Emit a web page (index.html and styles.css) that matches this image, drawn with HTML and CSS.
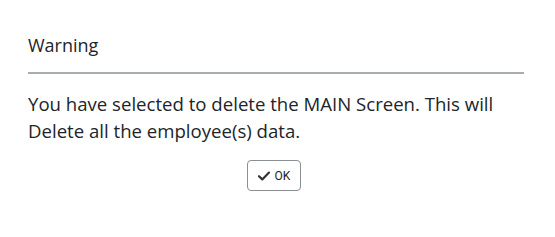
FILE: index.html
```html
<!DOCTYPE html>
<html>
<head>
<meta charset="utf-8">
<link rel="stylesheet" href="styles.css">
</head>
<body>
<div class="dialog">
  <div class="header">Warning</div>
  <div class="body">
    <p class="message">You have selected to delete the MAIN Screen. This will Delete all the employee(s) data.</p>
    <div class="actions">
      <button class="btn">
        <svg class="icon" viewBox="0 0 12 10" width="12" height="10"><path d="M1 5.2 L4.3 8.4 L11 1.6" fill="none" stroke="#333" stroke-width="2.2" stroke-linecap="round" stroke-linejoin="round"/></svg>
        <span>OK</span>
      </button>
    </div>
  </div>
</div>
</body>
</html>
```
FILE: styles.css
```css
html, body {
  margin: 0;
  padding: 0;
  background: #fff;
}
.dialog {
  width: 496px;
  padding: 0 31px 0 28px;
  font-family: "Open Sans", sans-serif;
  color: #212529;
}
.header {
  padding-top: 33px;
  height: 39px;
  font-size: 18px;
  line-height: 24px;
  font-weight: 500;
  border-bottom: 2px solid #a9adb0;
}
.body {
  padding-top: 16px;
}
.message {
  margin: 0;
  font-size: 18.6px;
  line-height: 27px;
  font-weight: 500;
}
.actions {
  display: flex;
  justify-content: center;
  padding-top: 16px;
}
.btn {
  display: flex;
  align-items: center;
  gap: 5px;
  height: 31px;
  padding: 0 10px;
  background: #fff;
  border: 1px solid #8a8f94;
  border-radius: 4px;
  font-family: "Roboto", sans-serif;
  font-size: 12px;
  color: #212529;
  margin-right: 4px;
}
.icon {
  display: block;
}
```
